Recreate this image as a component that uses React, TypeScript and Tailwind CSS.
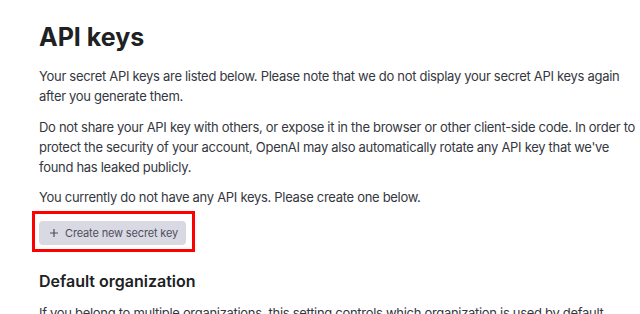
import React from "react";

export default function App() {
  return (
    <div className="w-[640px] h-[314px] overflow-hidden bg-white" style={{ fontFamily: "Inter, 'Noto Sans', sans-serif" }}>
      <div className="pl-[39px] pt-[21px] text-[13px] leading-[20px] tracking-[-0.3px] text-[#353740]">
        <h1 className="text-[25px] leading-[32px] font-bold tracking-[0px] text-[#202123] mb-[13px]">API keys</h1>
        <p className="mb-[11px]">
          Your secret API keys are listed below. Please note that we do not display your secret API keys again after you generate them.
        </p>
        <p className="mb-[10px]">
          Do not share your API key with others, or expose it in the browser or other client-side code. In order to protect the security of your account, OpenAI may also automatically rotate any API key that we've found has leaked publicly.
        </p>
        <p>You currently do not have any API keys. Please create one below.</p>
        <div className="mt-[14px] flex">
          <button className="relative flex items-center gap-[7px] h-[24px] w-[147px] pl-[11px] rounded-[4px] bg-[#d9d9e3] text-[11px] tracking-[-0.15px] text-[#4d4f5c]">
            <span className="absolute -left-[7px] -right-[9px] -top-[10px] -bottom-[7px] border-[3px] border-[#ff0000] pointer-events-none" />
            <svg width="8" height="8" viewBox="0 0 8 8" fill="none" stroke="#4d4f5c" strokeWidth="1.2">
              <path d="M4 0v8M0 4h8" />
            </svg>
            <span>Create new secret key</span>
          </button>
        </div>
        <h2 className="mt-[24px] text-[16px] leading-[24px] font-semibold tracking-[0px] text-[#202123]">Default organization</h2>
        <p className="mt-[10px]">
          If you belong to multiple organizations, this setting controls which organization is used by default
          <br />
          when making requests with the API keys above.
        </p>
      </div>
    </div>
  );
}
